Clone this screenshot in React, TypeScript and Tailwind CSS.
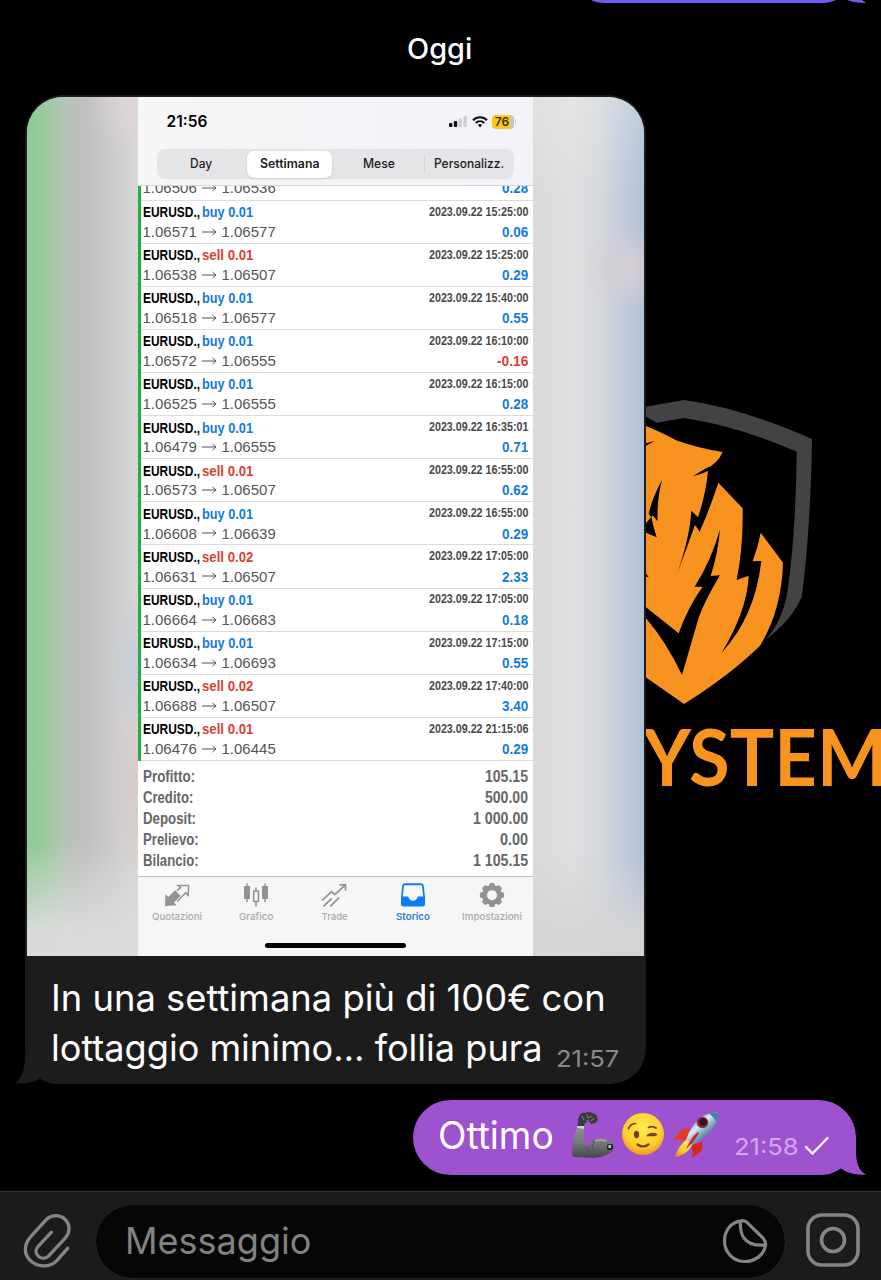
import { useLayoutEffect, useRef, useState } from "react";
import type { ReactNode } from "react";

/** One line of text condensed or widened to the width of its box. */
function Fit({ className, children }: { className: string; children: ReactNode }) {
  const box = useRef<HTMLSpanElement>(null);
  const line = useRef<HTMLSpanElement>(null);
  const [scale, setScale] = useState(1);
  useLayoutEffect(() => {
    if (box.current && line.current && line.current.offsetWidth > 0) {
      setScale(box.current.clientWidth / line.current.offsetWidth);
    }
  }, []);
  return (
    <span ref={box} className={`flex shrink-0 ${className}`}>
      <span
        ref={line}
        className="block shrink-0 origin-left whitespace-nowrap"
        style={{ transform: `scaleX(${scale})` }}
      >
        {children}
      </span>
    </span>
  );
}

type Trade = { side: "buy" | "sell"; lot: string; from: string; to: string; time: string; profit: string };

const trades: Trade[] = [
  { side: "buy", lot: "0.01", from: "1.06571", to: "1.06577", time: "15:25:00", profit: "0.06" },
  { side: "sell", lot: "0.01", from: "1.06538", to: "1.06507", time: "15:25:00", profit: "0.29" },
  { side: "buy", lot: "0.01", from: "1.06518", to: "1.06577", time: "15:40:00", profit: "0.55" },
  { side: "buy", lot: "0.01", from: "1.06572", to: "1.06555", time: "16:10:00", profit: "-0.16" },
  { side: "buy", lot: "0.01", from: "1.06525", to: "1.06555", time: "16:15:00", profit: "0.28" },
  { side: "buy", lot: "0.01", from: "1.06479", to: "1.06555", time: "16:35:01", profit: "0.71" },
  { side: "sell", lot: "0.01", from: "1.06573", to: "1.06507", time: "16:55:00", profit: "0.62" },
  { side: "buy", lot: "0.01", from: "1.06608", to: "1.06639", time: "16:55:00", profit: "0.29" },
  { side: "sell", lot: "0.02", from: "1.06631", to: "1.06507", time: "17:05:00", profit: "2.33" },
  { side: "buy", lot: "0.01", from: "1.06664", to: "1.06683", time: "17:05:00", profit: "0.18" },
  { side: "buy", lot: "0.01", from: "1.06634", to: "1.06693", time: "17:15:00", profit: "0.55" },
  { side: "sell", lot: "0.02", from: "1.06688", to: "1.06507", time: "17:40:00", profit: "3.40" },
  { side: "sell", lot: "0.01", from: "1.06476", to: "1.06445", time: "21:15:06", profit: "0.29" },
];

const totals = [
  { label: "Profitto:", labelWidth: "w-[52px]", value: "105.15", valueWidth: "w-[43px]" },
  { label: "Credito:", labelWidth: "w-[50px]", value: "500.00", valueWidth: "w-[43px]" },
  { label: "Deposit:", labelWidth: "w-[53px]", value: "1 000.00", valueWidth: "w-[55px]" },
  { label: "Prelievo:", labelWidth: "w-[56px]", value: "0.00", valueWidth: "w-[28px]" },
  { label: "Bilancio:", labelWidth: "w-[56px]", value: "1 105.15", valueWidth: "w-[55px]" },
];

function Prices({ from, to, profit }: { from: string; to: string; profit: string }) {
  const negative = profit.startsWith("-");
  return (
    <div className="flex h-[19.7px] items-center text-[15px] leading-[19.7px] text-[#555557]">
      <Fit className="w-[54px]">{from}</Fit>
      <svg className="mx-[5px] h-[8px] w-[15px]" viewBox="0 0 15 8" fill="none" stroke="#555557" strokeWidth="1">
        <path d="M0 4H14M10.5 1L14 4L10.5 7" />
      </svg>
      <Fit className="w-[54px]">{to}</Fit>
      <Fit
        className={`ml-auto text-[15.5px] font-bold ${negative ? "w-[31px] text-[#dc4032]" : "w-[26px] text-[#127ae0]"}`}
      >
        {profit}
      </Fit>
    </div>
  );
}

function TradeRow({ trade }: { trade: Trade }) {
  return (
    <div className="h-[43.1px] border-b border-[#dcdcde] pl-[1.5px] pr-[5.5px] pt-[1.4px]">
      <div className="flex h-[19.8px] items-center text-[15.5px] font-bold leading-[19.8px]">
        <Fit className="w-[57px] text-black">EURUSD.,</Fit>
        <Fit
          className={`ml-[2.5px] w-[51px] ${trade.side === "buy" ? "text-[#127ae0]" : "text-[#dc4032]"}`}
        >
          {trade.side} {trade.lot}
        </Fit>
        <Fit className="ml-auto w-[98.5px] pt-[1px] text-[12px] text-[#48484a]">2023.09.22 {trade.time}</Fit>
      </div>
      <Prices from={trade.from} to={trade.to} profit={trade.profit} />
    </div>
  );
}

function StatusBar() {
  return (
    <div className="flex h-[49px] items-center pl-[28.5px] pr-[17px]">
      <Fit className="w-[41px] text-[15.5px] font-semibold text-black">21:56</Fit>
      <svg className="ml-auto h-[11px] w-[18px]" viewBox="0 0 18 11">
        <rect x="0" y="7" width="3.4" height="4" rx="1" fill="#111" />
        <rect x="4.8" y="5" width="3.4" height="6" rx="1" fill="#111" />
        <rect x="9.6" y="2.4" width="3.4" height="8.6" rx="1" fill="#cfcfd1" />
        <rect x="14.4" y="0" width="3.4" height="11" rx="1" fill="#cfcfd1" />
      </svg>
      <svg className="ml-[5px] h-[12px] w-[16px]" viewBox="0 0 16 12" fill="none" stroke="#111" strokeWidth="2.1">
        <path d="M1 4.3C5 .3 11 .3 15 4.3M3.7 7C6.2 4.6 9.8 4.6 12.3 7" />
        <path d="M5.9 8.9C7.2 7.8 8.8 7.8 10.1 8.9L8 11.4Z" fill="#111" stroke="none" />
      </svg>
      <span className="ml-[4px] flex h-[14px] w-[22px] items-center justify-center rounded-[4px] bg-linear-to-r from-[#f9c91c] from-82% to-[#cbc7b8] to-82% pr-[1px] text-[12px] font-semibold leading-none text-[#3a2f10]">
        76
      </span>
      <span className="ml-px h-[5px] w-[1.5px] rounded-r bg-[#c9c9cb]" />
    </div>
  );
}

function Segments() {
  return (
    <div className="ml-[19px] mt-[3px] grid h-[30px] w-[357px] grid-cols-4 items-center rounded-[8px] bg-[#e5e5e8] text-[12.5px] font-medium text-[#1c1c1e]">
      <span className="flex justify-center pr-[2px] pt-[1px]">
        <Fit className="w-[22px]">Day</Fit>
      </span>
      <span className="mx-[1px] flex h-[27px] w-[85px] items-center justify-center rounded-[7px] bg-white pt-[1px] shadow-sm">
        <Fit className="w-[60px] font-semibold">Settimana</Fit>
      </span>
      <span className="flex justify-center pr-[2px] pt-[1px]">
        <Fit className="w-[32px]">Mese</Fit>
      </span>
      <span className="-ml-px flex h-[18px] items-center justify-center border-l border-[#d6d6da] pr-[1px] pt-[1px]">
        <Fit className="w-[70px]">Personalizz.</Fit>
      </span>
    </div>
  );
}

function QuotesIcon() {
  return (
    <svg className="h-[24px] w-[26px]" viewBox="0 0 26 24">
      <path d="M1 23L1.4 11.2L4.3 14L11 7.2L16.6 12.8L10 19.6L12.6 22.3Z" fill="#929294" />
      <path
        d="M12.8 7.6L16.6 4.7L14.1 2.6H24.6L24.2 12.2L21.6 9.7L13.2 18.4"
        fill="none"
        stroke="#929294"
        strokeWidth="1.5"
      />
    </svg>
  );
}

function ChartIcon() {
  return (
    <svg className="h-[24px] w-[26px]" viewBox="0 0 26 24">
      <g fill="#929294">
        <rect x="1" y="3" width="6" height="13" />
        <rect x="3.3" y="0.5" width="1.5" height="18.5" />
        <rect x="19" y="3" width="6" height="13" />
        <rect x="21.3" y="0.5" width="1.5" height="18.5" />
      </g>
      <path d="M13 4.5V8M13 19V23.5M10.7 8H15.4V18.5H10.7Z" fill="none" stroke="#929294" strokeWidth="1.6" />
    </svg>
  );
}

function TradeIcon() {
  return (
    <svg className="h-[24px] w-[26px]" viewBox="0 0 26 24" fill="none" stroke="#929294" strokeWidth="1.7">
      <path d="M1 17.5L10.5 8.7L13.7 11.7L24 2.4M18.5 1.8H24.5V7.6" />
      <path d="M2.5 23.3L10.8 15.3M9.2 23.3L18.3 14.3" />
    </svg>
  );
}

function HistoryIcon() {
  return (
    <svg className="h-[24px] w-[26px]" viewBox="0 0 26 24">
      <path
        fillRule="evenodd"
        d="M5 .3H20.5C22.4.3 23.5 1.3 23.8 3L25 14V21C25 22.7 24 23.5 22.3 23.5H3.7C2 23.5 1 22.7 1 21V14L2.2 3C2.5 1.3 3.4.3 5 .3ZM5.2 2.2C4.3 2.2 4 2.6 3.9 3.4L2.8 13.5H8.3C8.7 16 10.4 17.8 13 17.8S17.3 16 17.7 13.5H23.2L22.1 3.4C22 2.6 21.6 2.2 20.7 2.2Z"
        fill="#0c7cf6"
      />
    </svg>
  );
}

function SettingsIcon() {
  return (
    <svg className="h-[24px] w-[26px]" viewBox="0 0 26 24" fill="#929294">
      <path fillRule="evenodd" d="M13 2.1A9.9 9.9 0 1 1 12.99 2.1ZM13 7.2A5 5 0 1 0 13.01 7.2Z" />
      <rect x="10" y="0" width="6" height="5" rx="2.2" />
      <rect x="10" y="19.2" width="6" height="5" rx="2.2" />
      <rect x="10" y="0" width="6" height="5" rx="2.2" transform="rotate(45 13 12.1)" />
      <rect x="10" y="0" width="6" height="5" rx="2.2" transform="rotate(90 13 12.1)" />
      <rect x="10" y="0" width="6" height="5" rx="2.2" transform="rotate(135 13 12.1)" />
      <rect x="10" y="0" width="6" height="5" rx="2.2" transform="rotate(225 13 12.1)" />
      <rect x="10" y="0" width="6" height="5" rx="2.2" transform="rotate(270 13 12.1)" />
      <rect x="10" y="0" width="6" height="5" rx="2.2" transform="rotate(315 13 12.1)" />
    </svg>
  );
}

const tabs = [
  { label: "Quotazioni", width: "w-[50px]", icon: <QuotesIcon />, active: false },
  { label: "Grafico", width: "w-[34px]", icon: <ChartIcon />, active: false },
  { label: "Trade", width: "w-[26px]", icon: <TradeIcon />, active: false },
  { label: "Storico", width: "w-[34px]", icon: <HistoryIcon />, active: true },
  { label: "Impostazioni", width: "w-[60px]", icon: <SettingsIcon />, active: false },
];

function TradingScreen() {
  return (
    <div className="flex h-full w-[395px] flex-col bg-white font-['Liberation_Sans',Arial,sans-serif]">
      <div className="h-[88.5px] shrink-0 border-b border-[#d4d4d8] bg-linear-to-r from-[#f6f5f7] to-[#f2f3f8] font-['Inter',sans-serif]">
        <StatusBar />
        <Segments />
      </div>
      <div className="flex h-[575.5px] shrink-0 flex-col border-l-[3px] border-[#26ad42]">
        <div className="flex h-[15.2px] shrink-0 flex-col justify-end overflow-hidden border-b border-[#dcdcde] pb-[1.7px] pl-[1.5px] pr-[5.5px]">
          <Prices from="1.06506" to="1.06536" profit="0.28" />
        </div>
        {trades.map((trade) => (
          <TradeRow key={`${trade.time}${trade.from}`} trade={trade} />
        ))}
      </div>
      <div className="flex h-[115px] shrink-0 flex-col pl-[4.5px] pr-[5.5px] pt-[4.6px] text-[16px] font-bold text-[#666668]">
        {totals.map((row) => (
          <div key={row.label} className="flex h-[21.1px] items-center justify-between leading-[21.1px]">
            <Fit className={row.labelWidth}>{row.label}</Fit>
            <Fit className={row.valueWidth}>{row.value}</Fit>
          </div>
        ))}
      </div>
      <div className="flex flex-1 flex-col items-center border-t border-[#bdbdbf] bg-[#f6f6f7] font-['Inter',sans-serif]">
        <div className="grid w-full grid-cols-5 pr-[2px] pt-[6px]">
          {tabs.map((tab) => (
            <div
              key={tab.label}
              className={`flex flex-col items-center gap-[3px] text-[9.5px] font-medium leading-[13px] ${tab.active ? "text-[#2b7fd0]" : "text-[#a9a9ab]"}`}
            >
              {tab.icon}
              <Fit className={`${tab.width} ${tab.active ? "font-semibold" : ""}`}>{tab.label}</Fit>
            </div>
          ))}
        </div>
        <div className="mt-[20px] h-[5px] w-[141px] rounded-full bg-black" />
      </div>
    </div>
  );
}

function Wallpaper() {
  return (
    <div className="absolute left-[640px] top-[390px] h-[410px] w-[241px] overflow-hidden">
      <svg className="absolute left-0 top-0 h-[410px] w-[241px]" viewBox="0 0 723 1230">
        <path
          fill="#434345"
          d="M0 53L132 30Q310 55 516 147Q512 420 485 622Q455 690 376 750Q430 690 443 600Q468 420 470 185Q300 110 132 84L50 98L0 70Z"
        />
        <path
          fill="#f7931e"
          d="M0 98L18 108L60 126L112 152Q175 174 248 186Q232 222 200 234Q182 244 160 258Q186 252 204 243Q198 310 174 382L154 362Q150 440 110 555Q138 480 165 405L179 425Q208 360 235 278L308 355Q310 470 290 570L326 557Q322 660 245 788Q345 680 364 513L338 514Q354 472 362 428L429 518Q425 660 360 767Q270 855 132 942L0 850Z"
        />
        <path
          fill="#000"
          d="M0 640L18 652L116 730Q144 650 188 590L164 590Q215 510 240 418Q234 490 212 558L240 556Q190 640 174 690Q145 790 126 855Q78 755 18 685L0 670Z"
        />
        <path fill="#000" d="M66 270Q36 325 26 372L34 382L38 376L53 394Q50 330 66 270ZM34 380L18 400V428L50 442L40 408Z" />
        <path fill="#000" d="M18 160L44 153L18 167ZM18 550L26 562L18 560Z" />
      </svg>
      <div className="absolute left-[3px] top-[326px] font-['Lato',sans-serif] text-[79px] font-bold leading-[80px] text-[#f7931e]">
        <Fit className="w-[244px]">YSTEM</Fit>
      </div>
    </div>
  );
}

function IncomingMessage() {
  return (
    <div className="relative ml-[25px] h-[989px] w-[620.5px] rounded-t-[38px] rounded-br-[36px] rounded-bl-[34px] bg-[#1c1c1d] px-[2px] pt-[2px]">
      <svg className="absolute -left-[10px] bottom-0 h-[30px] w-[45px]" viewBox="0 0 45 30">
        <path d="M10 0C10 15 8 23 0 29.5C11 30 19 28.500 25 24.500C31 28.500 35 30 45 30V0Z" fill="#1c1c1d" />
      </svg>
      <div className="relative flex h-[859px] justify-center overflow-hidden rounded-t-[36px] bg-[#d9d9d9]">
        <div className="h-full w-[111px] bg-[radial-gradient(ellipse_50px_60px_at_100%_0%,#e0d4d6,transparent),radial-gradient(ellipse_30px_70px_at_100%_66%,#c6ccd8,transparent),radial-gradient(ellipse_30px_110px_at_100%_80%,#d8caca,transparent),linear-gradient(to_bottom,transparent_87%,#dcdcdcf0_97%),linear-gradient(to_right,#8fca95_0%,#98cb9c_14%,#b5c4b6_34%,#bfbfbf_50%,#c9c9c9_72%,#d8d7d7_100%)]" />
        <TradingScreen />
        <div className="h-full flex-1 bg-[radial-gradient(ellipse_45px_45px_at_85%_20%,#d6cfd4,transparent),linear-gradient(to_bottom,#ffffff30_0%,transparent_12%,transparent_88%,#d5d5d5f0_97%),linear-gradient(to_right,#dadada_0%,#dfdfdf_35%,#d4d7dc_62%,#c0cadb_84%,#b2c0d6_100%)]" />
      </div>
      <div className="flex flex-col pl-[23.500px] pt-[17px] font-['Inter',sans-serif] text-[37px] leading-[50px] text-white">
        <Fit className="w-[555px]">In una settimana più di 100€ con</Fit>
        <div className="flex">
          <Fit className="w-[492px]">lottaggio minimo… follia pura</Fit>
          <Fit className="ml-[13.500px] mt-[11px] w-[63px] text-[23.5px] text-[#8a8a8c]">21:57</Fit>
        </div>
      </div>
    </div>
  );
}

function ArmEmoji() {
  return (
    <svg className="h-[48px] w-[45px]" viewBox="0 0 45 48" role="img">
      <defs>
        <linearGradient id="steel" x1="0" y1="0" x2="0" y2="1">
          <stop offset="0" stopColor="#8d8e91" />
          <stop offset="0.5" stopColor="#74767a" />
          <stop offset="1" stopColor="#46484c" />
        </linearGradient>
      </defs>
      <path d="M7 17Q2 28 2 43Q2 46 5 46L24 47Q32 46 39 43Q44 40 44 35Q43 29 36 28Q30 26 24 29L16 35Q13 33 14 29L14 18Z" fill="url(#steel)" />
      <path d="M15 35Q19 37 18 42M24 29Q21 35 24 42" fill="none" stroke="#505256" strokeWidth="1" />
      <path d="M25 30Q31 28 36 30" fill="none" stroke="#a9abae" strokeWidth="1.6" />
      <path d="M7 17L14 18L14 14.500H8Z" fill="#d2d3d5" />
      <path d="M7.500 15L8.500 7Q10 1 15 2Q19 0 22 2Q27 3 27 6Q29 10 25 12L21 13L19 10L15 12L14 15Z" fill="#39393d" />
      <path d="M12 5L14 9M17 3L18 7L22 5M21 10L24 7M16 10L19 9" fill="none" stroke="#77787c" strokeWidth="1.1" />
      <rect x="37" y="33" width="6" height="6" rx="2" fill="#202225" />
      <rect x="38.500" y="34" width="2.500" height="3" fill="#c8cacc" />
    </svg>
  );
}

function WinkEmoji() {
  return (
    <svg className="h-[44px] w-[44px]" viewBox="0 0 44 44" role="img">
      <defs>
        <radialGradient id="face" cx="0.5" cy="0.35" r="0.68">
          <stop offset="0" stopColor="#ffe94f" />
          <stop offset="0.65" stopColor="#fdcf30" />
          <stop offset="1" stopColor="#ee9418" />
        </radialGradient>
      </defs>
      <circle cx="22" cy="22" r="21" fill="url(#face)" />
      <ellipse cx="15.500" cy="22.500" rx="2.600" ry="3.700" fill="#70431b" />
      <g fill="none" stroke="#70431b" strokeLinecap="round" strokeWidth="1.700">
        <path d="M7.500 16.500Q10 11.500 14.500 11.500" />
        <path d="M27.500 15.500Q31 13.500 35 16" />
        <path d="M26.500 23.500Q31 20.500 35.500 22.500M28 23.500L34 23.500" />
        <path d="M16.500 32.500Q22 36.500 27.500 32.500" strokeWidth="2.200" />
      </g>
    </svg>
  );
}

function RocketEmoji() {
  return (
    <svg className="h-[48px] w-[48px]" viewBox="0 0 48 48" role="img">
      <defs>
        <linearGradient id="hull" x1="0.2" y1="0.1" x2="0.8" y2="0.8">
          <stop offset="0" stopColor="#4f83ad" />
          <stop offset="0.4" stopColor="#dceaf2" />
          <stop offset="0.65" stopColor="#7fa6c4" />
          <stop offset="1" stopColor="#2d5478" />
        </linearGradient>
        <linearGradient id="flame" x1="1" y1="0" x2="0" y2="1">
          <stop offset="0" stopColor="#fff36a" />
          <stop offset="0.6" stopColor="#f8c928" />
          <stop offset="1" stopColor="#f0801f" />
        </linearGradient>
      </defs>
      <path d="M18 18Q10 16 7 22L1 30Q7 27 14 30Z" fill="#e8391f" />
      <path d="M30 31Q32 38 27 42L20 47Q22 41 19 34Z" fill="#d9261c" />
      <path d="M46 1.500Q35 1 27 8Q18 17 14 29Q16 33 20 34Q32 29 40 19Q47 11 46 1.500Z" fill="url(#hull)" />
      <path d="M46 1.500Q41 1 37 2.500Q42 6 44.500 11Q47 6 46 1.500Z" fill="#477fae" />
      <circle cx="30.500" cy="11.500" r="5.800" fill="#9d2632" />
      <circle cx="31" cy="11" r="3.800" fill="#2b1a24" />
      <path d="M14 29Q6 35 3 46Q15 44 20 34Q18 30 14 29Z" fill="url(#flame)" />
      <path d="M26 21Q20 25 14 38Q22 31 27 22Z" fill="#c52425" />
    </svg>
  );
}

function OutgoingMessage() {
  return (
    <div className="relative ml-[413px] mt-[16px] flex h-[74.500px] w-[443px] items-start rounded-full bg-[#9e52d0] font-['Inter',sans-serif] text-white">
      <svg className="absolute -right-[10px] bottom-0 h-[38px] w-[46px]" viewBox="0 0 46 38">
        <path d="M36 0V14C36 26 39 34 46 37.500C36 38.500 27 36 21 31.500C14 36 8 38 0 38Q0 15 36 0Z" fill="#9e52d0" />
      </svg>
      <Fit className="ml-[25px] w-[116px] pt-[11px] text-[37.500px] leading-[50px]">Ottimo</Fit>
      <div className="ml-[15.500px] mt-[11px] flex items-start">
        <ArmEmoji />
        <span className="ml-[6px] mt-[1px]">
          <WinkEmoji />
        </span>
        <span className="ml-[7px]">
          <RocketEmoji />
        </span>
      </div>
      <Fit className="relative ml-[14.500px] mt-[32px] w-[64px] text-[23.500px] leading-[30px] text-[#d3a9ee]">21:58</Fit>
      <svg className="relative ml-[6px] mt-[36px] h-[20px] w-[26px]" viewBox="0 0 26 20" fill="none" stroke="#fff" strokeWidth="2.400" strokeLinecap="round" strokeLinejoin="round">
        <path d="M2 11L8.500 17.500L23.500 2" />
      </svg>
    </div>
  );
}

function Composer() {
  return (
    <div className="mt-[16.500px] flex h-[90px] items-start border-t border-[#303031] bg-[#1b1b1c] pt-[13px]">
      <svg className="ml-[22px] mt-[7px] h-[56px] w-[51px]" viewBox="0 0 52 56" fill="none" stroke="#858587" strokeWidth="3.400" strokeLinecap="round" strokeLinejoin="round">
        <path d="M46.500 36.500L35.500 49C28 57 14.500 55.500 7.500 48C1.500 41 2.500 32 8.500 25L24.500 7.500C29 2.500 38 1.500 43.500 6.500C49.500 12 49 20 44.500 25.500L27 44.500C24 47.500 19.500 47.500 16.500 44.500C13.500 41.500 13.500 37.500 16.500 34.500L30 20" />
      </svg>
      <div className="ml-[23px] flex h-[73px] w-[689px] items-center rounded-full bg-[#060606] pl-[29px] pr-[17px] outline-1 outline-[#202021]">
        <Fit className="w-[186px] pb-[1px] font-['Inter',sans-serif] text-[37px] leading-[50px] text-[#828284]">Messaggio</Fit>
        <svg className="mb-px ml-auto h-[46px] w-[46px]" viewBox="0 0 46 46" fill="none" stroke="#858587" strokeWidth="3.200" strokeLinejoin="round">
          <path d="M19 2.800C9.500 4 2.500 12 2.500 23C2.500 34.500 11.500 43.500 23 43.500C33.500 43.500 42 36.500 43.500 27.500C44 25 43 22.500 41 20L25.500 4.800C23.500 3 21.500 2.400 19 2.800Z" />
          <path d="M18.300 3Q18 15 22 20Q28 28.500 43.500 27" />
        </svg>
      </div>
      <svg className="ml-[20px] mt-[7px] h-[56px] w-[56px]" viewBox="0 0 56 56" fill="none" stroke="#858587" strokeWidth="3.600">
        <rect x="3" y="3" width="50" height="50" rx="14" />
        <circle cx="28" cy="28" r="11.500" />
      </svg>
    </div>
  );
}

export default function App() {
  return (
    <div className="relative h-[1280px] w-[881px] overflow-hidden bg-black">
      <Wallpaper />
      <svg className="absolute left-[588px] top-0 h-[4px] w-[280px]" viewBox="0 0 280 4" fill="#6b5cf6">
        <path d="M3 0H248Q242 3 234 3H17Q8 3 3 0ZM259 0H274L278 3Q266 3 259 0Z" />
      </svg>
      <div className="flex h-[95px] items-center justify-center pr-[2px] pt-[3px] font-['Inter',sans-serif] text-[28px] font-medium leading-none text-white">
        <Fit className="w-[65px]">Oggi</Fit>
      </div>
      <IncomingMessage />
      <OutgoingMessage />
      <Composer />
    </div>
  );
}
